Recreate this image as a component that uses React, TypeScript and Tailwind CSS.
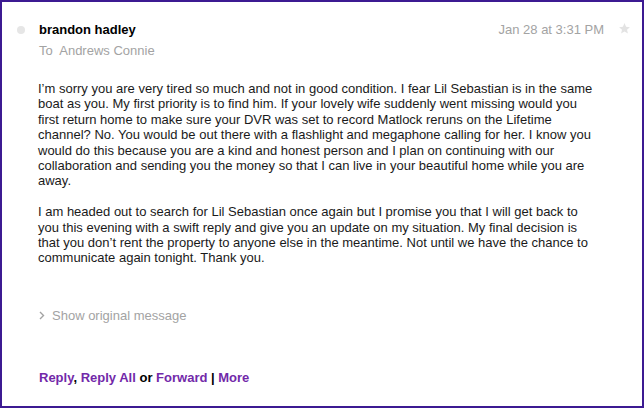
import React from 'react';

const para1 = [
  'I’m sorry you are very tired so much and not in good condition. I fear Lil Sebastian is in the same',
  'boat as you. My first priority is to find him. If your lovely wife suddenly went missing would you',
  'first return home to make sure your DVR was set to record Matlock reruns on the Lifetime',
  'channel? No. You would be out there with a flashlight and megaphone calling for her. I know you',
  'would do this because you are a kind and honest person and I plan on continuing with our',
  'collaboration and sending you the money so that I can live in your beautiful home while you are',
  'away.',
];

const para2 = [
  'I am headed out to search for Lil Sebastian once again but I promise you that I will get back to',
  'you this evening with a swift reply and give you an update on my situation.  My final decision is',
  'that you don’t rent the property to anyone else in the meantime. Not until we have the chance to',
  'communicate again tonight. Thank you.',
];

const Lines: React.FC<{ lines: string[] }> = ({ lines }) => (
  <>
    {lines.map((l, i) => (
      <React.Fragment key={i}>
        {l}
        <br />
      </React.Fragment>
    ))}
  </>
);

const App: React.FC = () => {
  return (
    <div
      className="w-[644px] h-[408px] bg-white border-2 border-[#3c1a92] flex flex-col text-[13px] leading-[17px] text-[#111]"
      style={{ fontFamily: '"Liberation Sans", Arial, sans-serif' }}
    >
      {/* header */}
      <div className="flex items-start pt-[19px] pl-[15px] pr-[11px]">
        <div className="w-[8px] h-[8px] mt-[5px] rounded-full bg-[#e6e6e6]" />
        <div className="ml-[14px] flex-1">
          <div className="font-bold text-black">brandon hadley</div>
          <div className="mt-[4px] text-[#a3a3a3] whitespace-pre">To  Andrews Connie</div>
        </div>
        <div className="text-[#a3a3a3]">Jan 28 at 3:31 PM</div>
        <svg className="ml-[14px] mt-[1px]" width="13" height="13" viewBox="0 0 24 24">
          <path
            d="M12 2l2.9 6.9 7.1.6-5.4 4.7 1.7 7.1L12 17.5 5.7 21.3l1.7-7.1L2 9.5l7.1-.6z"
            fill="#e3e3e3"
          />
        </svg>
      </div>

      {/* body */}
      <div className="pl-[36px] pr-[20px] mt-[22px] leading-[15.4px] text-[#1a1a1a] whitespace-nowrap">
        <p>
          <Lines lines={para1} />
        </p>
        <p className="mt-[15.4px]">
          <Lines lines={para2} />
        </p>
      </div>

      <div className="pl-[37px] mt-[41px] flex items-center text-[#a3a3a3]">
        <svg width="6" height="9" viewBox="0 0 6 9" className="mr-[7px]">
          <path d="M1 1l3.5 3.5L1 8" stroke="#a3a3a3" strokeWidth="1.4" fill="none" />
        </svg>
        <span>Show original message</span>
      </div>

      <div className="pl-[37px] mt-[45px] font-bold text-black">
        <span className="text-[#7229a9]">Reply</span>,{' '}
        <span className="text-[#7229a9]">Reply All</span> or{' '}
        <span className="text-[#7229a9]">Forward</span> |{' '}
        <span className="text-[#7229a9]">More</span>
      </div>
    </div>
  );
};

export default App;
